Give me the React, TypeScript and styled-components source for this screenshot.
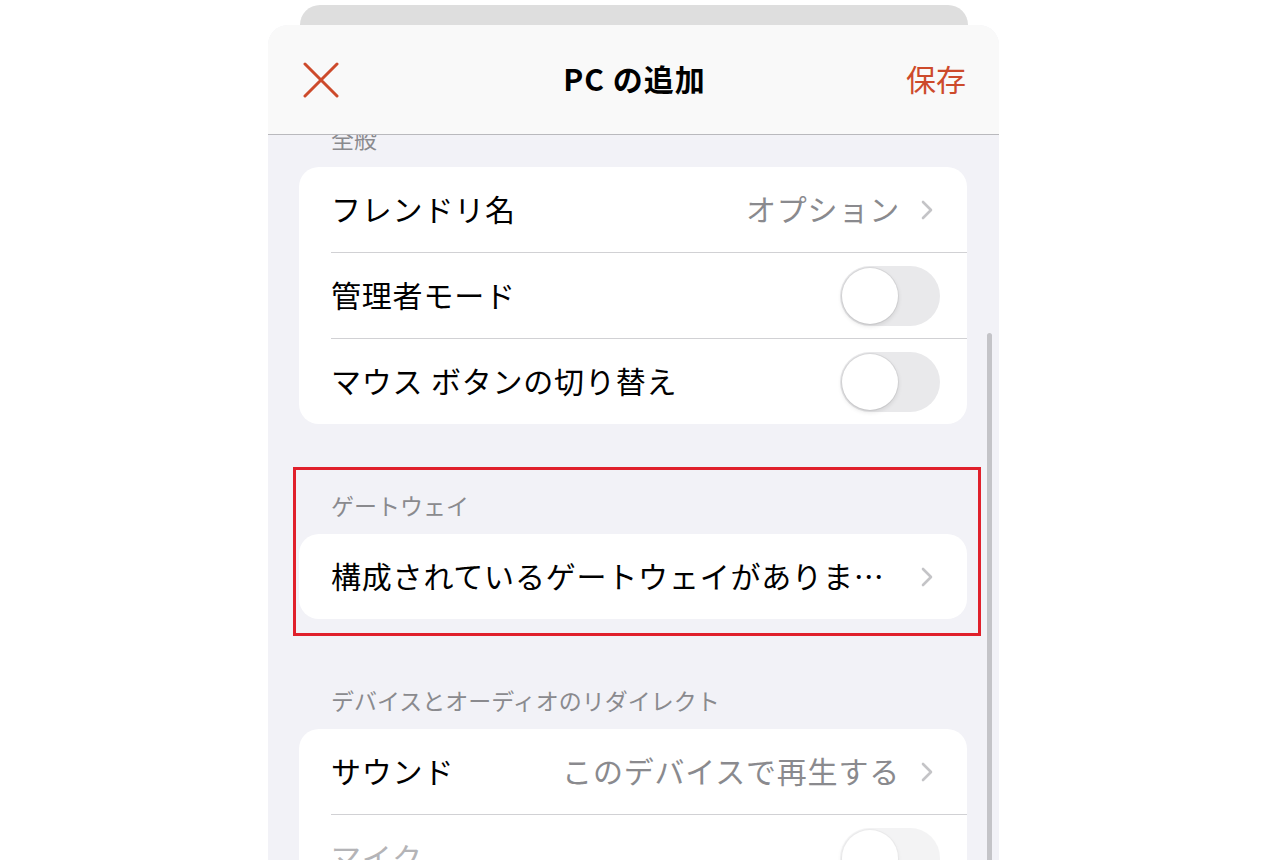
import React, { FC } from 'react'
import styled, { createGlobalStyle } from 'styled-components'

const ACCENT = '#cd4a2b'
const FONT = `"Noto Sans CJK JP", "Noto Sans", "Liberation Sans", sans-serif`

const GlobalStyle = createGlobalStyle`
  html, body {
    margin: 0;
    padding: 0;
    background: #ffffff;
    font-family: ${FONT};
  }
`

interface Item {
  label: string
  value?: string
  kind: 'link' | 'toggle'
  disabled?: boolean
}

const Chevron: FC = () => (
  <svg width="14" height="22" viewBox="0 0 14 22">
    <path
      d="M3 3 L11 11 L3 19"
      fill="none"
      stroke="#c4c4c7"
      strokeWidth="2.6"
      strokeLinecap="round"
      strokeLinejoin="round"
    />
  </svg>
)

const CloseIcon: FC = () => (
  <svg width="36" height="36" viewBox="0 0 36 36">
    <path
      d="M2 2 L34 34 M34 2 L2 34"
      stroke={ACCENT}
      strokeWidth="3"
      strokeLinecap="round"
    />
  </svg>
)

const SettingRow: FC<{ item: Item }> = ({ item }) => (
  <S.Row>
    <S.Label $disabled={item.disabled}>{item.label}</S.Label>
    {item.kind === 'link' ? (
      <S.Trail>
        {item.value && <S.Value>{item.value}</S.Value>}
        <Chevron />
      </S.Trail>
    ) : (
      <S.Switch $disabled={item.disabled}>
        <S.Knob />
      </S.Switch>
    )}
  </S.Row>
)

const general: Item[] = [
  { label: 'フレンドリ名', value: 'オプション', kind: 'link' },
  { label: '管理者モード', kind: 'toggle' },
  { label: 'マウス ボタンの切り替え', kind: 'toggle' },
]

const redirect: Item[] = [
  { label: 'サウンド', value: 'このデバイスで再生する', kind: 'link' },
  { label: 'マイク', kind: 'toggle', disabled: true },
]

const App: FC = () => (
  <>
    <GlobalStyle />
    <S.Page>
      <S.BackCard />
      <S.Sheet>
        <S.Header>
          <S.HeaderButton>
            <CloseIcon />
          </S.HeaderButton>
          <S.Title>PC の追加</S.Title>
          <S.Save>保存</S.Save>
        </S.Header>
        <S.Body>
          <S.Section $first>
            <S.SectionLabel>全般</S.SectionLabel>
            <S.Card>
              {general.map((it) => (
                <SettingRow key={it.label} item={it} />
              ))}
            </S.Card>
          </S.Section>
          <S.Section $highlight>
            <S.SectionLabel>ゲートウェイ</S.SectionLabel>
            <S.Card>
              <SettingRow
                item={{ label: '構成されているゲートウェイがありま…', kind: 'link' }}
              />
            </S.Card>
          </S.Section>
          <S.Section>
            <S.SectionLabel>デバイスとオーディオのリダイレクト</S.SectionLabel>
            <S.Card>
              {redirect.map((it) => (
                <SettingRow key={it.label} item={it} />
              ))}
            </S.Card>
          </S.Section>
          <S.ScrollBar />
        </S.Body>
      </S.Sheet>
    </S.Page>
  </>
)

const S = {
  Page: styled.div`
    width: 1266px;
    height: 860px;
    overflow: hidden;
    display: flex;
    flex-direction: column;
    align-items: center;
  `,
  BackCard: styled.div`
    width: 668px;
    height: 40px;
    margin-top: 5px;
    margin-left: 1px;
    background: #dedede;
    border-radius: 20px 20px 0 0;
    flex-shrink: 0;
  `,
  Sheet: styled.div`
    width: 731px;
    height: 835px;
    margin-top: -20px;
    margin-left: 1px;
    background: #f2f2f7;
    border-radius: 20px 20px 0 0;
    overflow: hidden;
    display: flex;
    flex-direction: column;
    flex-shrink: 0;
  `,
  Header: styled.div`
    height: 109px;
    flex-shrink: 0;
    display: grid;
    grid-template-columns: 1fr auto 1fr;
    align-items: center;
    padding: 0 33px 0 35px;
    background: #f9f9f9;
    border-bottom: 1px solid #b9b9bd;
    position: relative;
    z-index: 2;
  `,
  HeaderButton: styled.div`
    display: flex;
    align-items: center;
    justify-self: start;
  `,
  Title: styled.div`
    font-size: 30px;
    font-weight: 700;
    color: #000;
    letter-spacing: 1px;
    margin-top: -4px;
  `,
  Save: styled.div`
    justify-self: end;
    font-size: 30px;
    color: ${ACCENT};
    margin-top: -4px;
  `,
  Body: styled.div`
    flex: 1;
    position: relative;
    overflow: hidden;
    padding: 0 32px 0 31px;
  `,
  Section: styled.div<{ $first?: boolean; $highlight?: boolean }>`
    position: relative;
    margin-top: ${(p) => (p.$first ? '-11px' : '67px')};

    ${(p) =>
      p.$highlight &&
      `
      &::after {
        content: '';
        position: absolute;
        top: -24px;
        left: -6px;
        right: -14px;
        bottom: -17px;
        border: 3px solid #e0202b;
        pointer-events: none;
      }
    `}
  `,
  SectionLabel: styled.div`
    height: 28px;
    line-height: 28px;
    padding-left: 32px;
    margin-bottom: 15px;
    font-size: 23px;
    color: #8a8a8e;
  `,
  Card: styled.div`
    background: #ffffff;
    border-radius: 20px;
    overflow: hidden;
  `,
  Row: styled.div`
    height: 85px;
    margin-left: 32px;
    padding-right: 27px;
    display: flex;
    align-items: center;
    justify-content: space-between;

    & + & {
      border-top: 1px solid #d1d1d4;
    }
  `,
  Label: styled.span<{ $disabled?: boolean }>`
    font-size: 30px;
    letter-spacing: 0.8px;
    margin-top: -4px;
    color: ${(p) => (p.$disabled ? '#b4b4b7' : '#000000')};
    white-space: nowrap;
  `,
  Trail: styled.div`
    display: flex;
    align-items: center;
    gap: 20px;
    padding-right: 6px;
  `,
  Value: styled.span`
    font-size: 30px;
    letter-spacing: 0.8px;
    margin-top: -4px;
    color: #8a8a8e;
    white-space: nowrap;
  `,
  Switch: styled.div<{ $disabled?: boolean }>`
    width: 100px;
    height: 60px;
    border-radius: 30px;
    background: #e9e9eb;
    padding: 2px;
    box-sizing: border-box;
    display: flex;
    align-items: center;
    opacity: ${(p) => (p.$disabled ? 0.5 : 1)};
  `,
  Knob: styled.div`
    width: 56px;
    height: 56px;
    border-radius: 50%;
    background: #ffffff;
    box-shadow: 0 2px 5px rgba(0, 0, 0, 0.12), 0 0 0 1px rgba(0, 0, 0, 0.06);
  `,
  ScrollBar: styled.div`
    position: absolute;
    right: 7px;
    top: 198px;
    bottom: -10px;
    width: 5px;
    border-radius: 3px;
    background: #c4c4c8;
  `,
}

export default App
